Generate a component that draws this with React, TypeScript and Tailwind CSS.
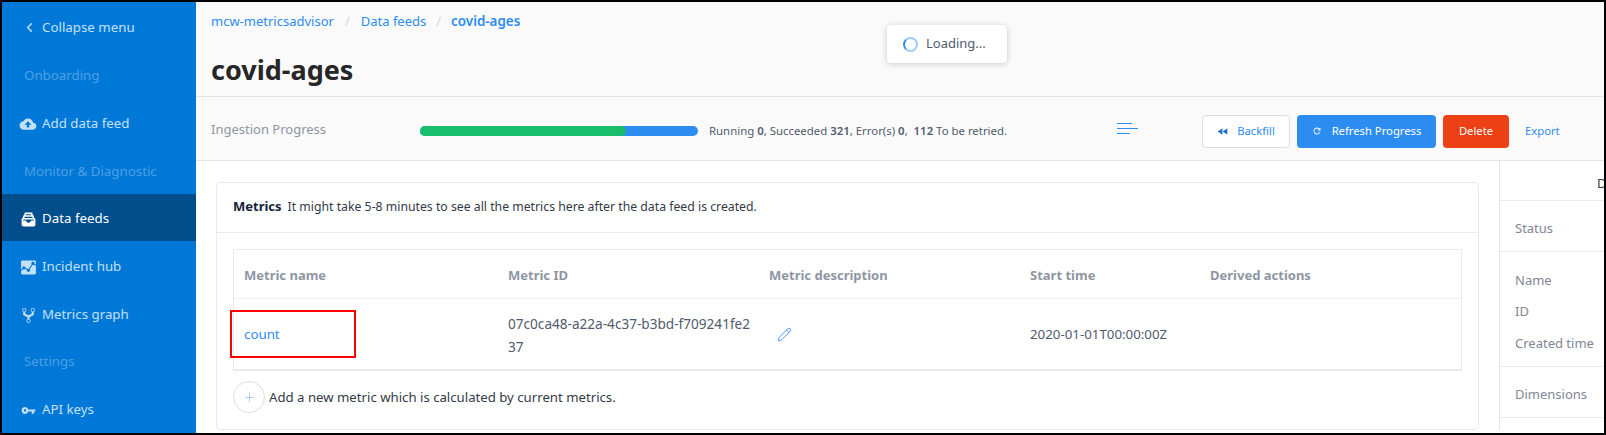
import { IoMdAnalytics, IoMdCloudUpload, IoMdFiling, IoMdGitNetwork, IoMdKey, IoMdRefresh, IoMdRewind } from "react-icons/io";
import { ChevronLeft, Pencil, Plus } from "lucide-react";
import type { ReactNode } from "react";

type NavItem = {
  label: string;
  height: string;
  icon?: ReactNode;
  section?: boolean;
  active?: boolean;
};

const navItems: NavItem[] = [
  { label: "Collapse menu", height: "h-[48px]", icon: <ChevronLeft size={15} strokeWidth={2.5} /> },
  { label: "Onboarding", height: "h-[48px]", section: true },
  { label: "Add data feed", height: "h-[49px]", icon: <IoMdCloudUpload size={18} /> },
  { label: "Monitor & Diagnostic", height: "h-[47px]", section: true },
  { label: "Data feeds", height: "h-[47px]", icon: <IoMdFiling size={17} />, active: true },
  { label: "Incident hub", height: "h-[49px]", icon: <IoMdAnalytics size={17} /> },
  { label: "Metrics graph", height: "h-[47px]", icon: <IoMdGitNetwork size={17} /> },
  { label: "Settings", height: "h-[47px]", section: true },
  { label: "API keys", height: "h-[49px]", icon: <IoMdKey size={17} /> },
];

function Sidebar() {
  return (
    <aside className="w-[194px] shrink-0 bg-[#0078d7] text-[13.3px]">
      {navItems.map((item) => (
        <div
          key={item.label}
          className={`flex items-center pt-[3px] ${item.height} ${item.section ? "pl-[22px] text-[#4f9fe3]" : "text-[#c4e0f7]"} ${item.active ? "bg-[#004e8c] text-white" : ""}`}
        >
          {item.icon && <span className="flex w-[40px] shrink-0 justify-end pr-[5px]">{item.icon}</span>}
          {item.label}
        </div>
      ))}
    </aside>
  );
}

function Header() {
  return (
    <div className="h-[95px] border-b border-[#e3e5ea] bg-[#fafafa] pl-[15px]">
      <div className="flex h-[39px] items-center text-[13px] text-[#2d8cf0]">
        <span>mcw-metricsadvisor</span>
        <span className="px-[11px] text-[#d5d7db]">/</span>
        <span>Data feeds</span>
        <span className="pr-[10px] pl-[10px] text-[#d5d7db]">/</span>
        <span className="text-[13.4px] font-semibold">covid-ages</span>
      </div>
      <h1 className="text-[27px] leading-[58px] font-bold text-[#262626]">covid-ages</h1>
    </div>
  );
}

function ProgressRow() {
  return (
    <div className="flex h-[64px] items-center border-b border-[#e3e5ea] bg-[#fafafa] pt-[5px] pl-[15px]">
      <span className="-mt-[2px] w-[209px] shrink-0 text-[13px] text-[#8f96a3]">Ingestion Progress</span>
      <div className="h-[10px] w-[278px] shrink-0 rounded-full bg-[#2d8cf0]">
        <div className="h-full w-[206px] rounded-full bg-[#19be6b]" />
      </div>
      <span className="ml-[11px] w-[408px] shrink-0 text-[11.4px] text-[#515a6e]">
        Running <b className="font-semibold">0</b>, Succeeded <b className="font-semibold">321</b>, Error(s) <b className="font-semibold">0</b>,&nbsp; <b className="font-semibold">112</b> To be retried.
      </span>
      <svg width="21" height="12" viewBox="0 0 21 12" className="-mt-[5px] shrink-0" fill="none" stroke="#2d8cf0" strokeWidth="1">
        <path d="M0 .5h15M0 5.5h21M0 10.5h13" />
      </svg>
      <button className="ml-[64px] flex h-[33px] w-[88px] items-center justify-center gap-[9px] rounded border border-[#dcdee2] bg-white text-[11.25px] text-[#2d8cf0]">
        <IoMdRewind size={11} className="text-[#1f6fd0]" />
        Backfill
      </button>
      <button className="ml-[7px] flex h-[33px] w-[139px] items-center justify-center gap-[10px] rounded bg-[#2d8cf0] text-[11.25px] text-white">
        <IoMdRefresh size={10} />
        Refresh Progress
      </button>
      <button className="ml-[7px] h-[33px] w-[66px] rounded bg-[#ed4014] text-[11.25px] text-white">Delete</button>
      <span className="ml-[16px] text-[11.25px] text-[#2d8cf0]">Export</span>
    </div>
  );
}

function MetricsCard() {
  return (
    <div className="h-[248px] rounded border border-[#e8eaec] bg-white">
      <div className="flex h-[50px] items-center gap-[6px] border-b border-[#e8eaec] px-[16px] pb-[1px] text-[12.25px] text-[#333a47]">
        <b className="text-[13px] font-bold text-[#17233d]">Metrics</b>
        It might take 5-8 minutes to see all the metrics here after the data feed is created.
      </div>
      <div className="px-[16px] pt-[16px]">
        <div className="border border-[#e8eaec] border-b-2 text-[13px]">
          <div className="grid h-[49px] grid-cols-[264px_261px_261px_180px_1fr] items-center border-b border-[#e8eeff] pt-[3px] pl-[10px] font-bold text-[#8f96a3]">
            <span>Metric name</span>
            <span>Metric ID</span>
            <span>Metric description</span>
            <span>Start time</span>
            <span>Derived actions</span>
          </div>
          <div className="grid h-[70px] grid-cols-[264px_261px_261px_180px_1fr] items-center pt-[2px] pl-[10px] text-[13.3px] text-[#515a6e]">
            <span className="text-[#2d8cf0]">count</span>
            <span className="w-[248px] text-[13.6px] leading-[23px] break-all">07c0ca48-a22a-4c37-b3bd-f709241fe237</span>
            <span className="-mt-[2px] pl-[8px]"><Pencil size={15} strokeWidth={1.5} className="text-[#4d94ee]" /></span>
            <span>2020-01-01T00:00:00Z</span>
            <span />
          </div>
        </div>
        <div className="mt-[10px] flex items-center gap-[4px] text-[13.2px] text-[#333a47]">
          <span className="flex h-[32px] w-[32px] items-center justify-center rounded-full border border-[#dcdee2] text-[#7fb8f5]">
            <Plus size={13} strokeWidth={1.25} />
          </span>
          <span className="pt-[2px]">Add a new metric which is calculated by current metrics.</span>
        </div>
      </div>
    </div>
  );
}

function DetailsPanel() {
  const sections = [
    { height: "h-[40px]", rows: [] as string[], title: "Data feed details" },
    { height: "h-[51px]", rows: ["Status"] },
    { height: "h-[115px]", rows: ["Name", "ID", "Created time"] },
    { height: "h-[51px]", rows: ["Dimensions"] },
  ];
  return (
    <div className="w-[300px] shrink-0 border-l border-[#e3e5ea] text-[13px] text-[#808695]">
      {sections.map((section, i) => (
        <div key={i} className={`flex flex-col justify-center gap-[12px] border-b border-[#e8eaec] pt-[6px] pl-[15px] ${section.height}`}>
          {section.title && <span className="pl-[82px] whitespace-nowrap text-[#333a47]">{section.title}</span>}
          {section.rows.map((row) => (
            <span key={row}>{row}</span>
          ))}
        </div>
      ))}
    </div>
  );
}

export default function App() {
  return (
    <div className="relative box-border flex h-[435px] w-[1606px] overflow-hidden border-2 border-black bg-white font-['Noto_Sans',sans-serif]">
      <Sidebar />
      <main className="min-w-0 flex-1">
        <Header />
        <ProgressRow />
        <div className="flex">
          <div className="w-[1303px] shrink-0 px-[20px] pt-[21px]">
            <MetricsCard />
          </div>
          <DetailsPanel />
        </div>
      </main>
      <div className="absolute top-[23px] left-[885px] flex h-[38px] w-[120px] items-center gap-[8px] rounded bg-white pl-[16px] text-[13px] text-[#515a6e] shadow-[0_1px_6px_rgba(0,0,0,0.2)]">
        <span className="h-[15px] w-[15px] rounded-full border-2 border-[#9ccbf8] border-l-[#2d8cf0]" />
        Loading...
      </div>
      <div className="absolute top-[308px] left-[228px] h-[48px] w-[126px] border-2 border-[#ff0000]" />
    </div>
  );
}
